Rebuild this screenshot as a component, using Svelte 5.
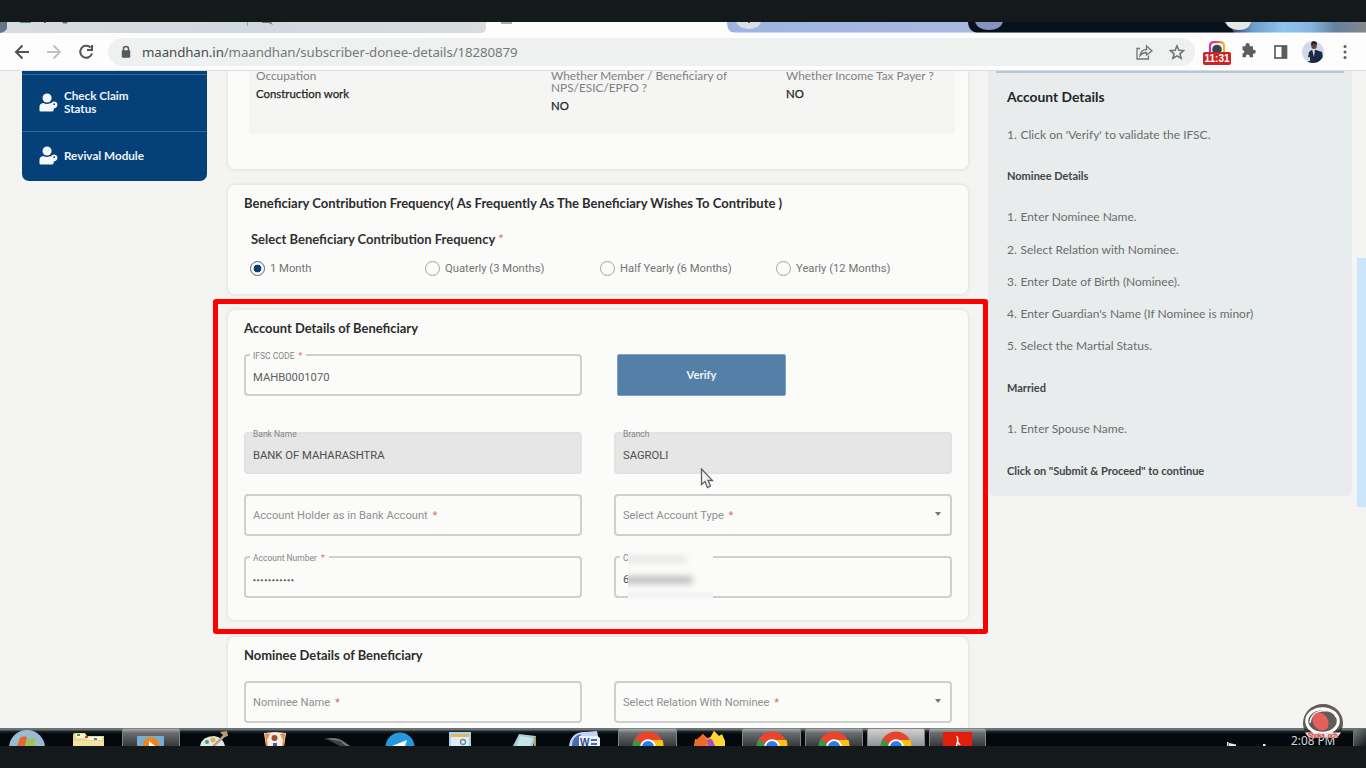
<script>
  const occupation = [
    { label: ['Occupation'], value: 'Construction work' },
    { label: ['Whether Member / Beneficiary of', 'NPS/ESIC/EPFO ?'], value: 'NO' },
    { label: ['Whether Income Tax Payer ?'], value: 'NO' }
  ];
  const frequencies = ['1 Month', 'Quaterly (3 Months)', 'Half Yearly (6 Months)', 'Yearly (12 Months)'];
  const nomineeSteps = [
    'Enter Nominee Name.',
    'Select Relation with Nominee.',
    'Enter Date of Birth (Nominee).',
    "Enter Guardian's Name (If Nominee is minor)",
    'Select the Martial Status.'
  ];
  const menu = [['Check Claim', 'Status'], ['Revival Module']];
</script>

{#snippet chrome()}
  <svg width="32" height="15" viewBox="0 0 32 15">
    <circle cx="16" cy="16" r="15.500" fill="#e8452c" />
    <path d="M0.500 15A15.500 15.500 0 0 1 3 8L11 15Z" fill="#2e9b4b" />
    <path d="M16 9H30.500Q31.500 12 31.500 15H16Z" fill="#fbc116" />
    <circle cx="16" cy="16" r="7.800" fill="#fff" />
    <circle cx="16" cy="16" r="6" fill="#2b7de9" />
  </svg>
{/snippet}

<div class="screen">
  <div class="band"></div>

  <div class="tabs">
    <svg width="1366" height="11" viewBox="0 0 1366 11">
      <defs>
        <linearGradient id="t1"><stop offset="0" stop-color="#d9dce0" /><stop offset=".5" stop-color="#d0d8e0" /><stop offset="1" stop-color="#d8dcde" /></linearGradient>
        <linearGradient id="t2"><stop offset="0" stop-color="#9db4e2" /><stop offset="1" stop-color="#a9b8e0" /></linearGradient>
        <linearGradient id="t3"><stop offset="0" stop-color="#22384f" /><stop offset=".18" stop-color="#6f9dca" /><stop offset=".4" stop-color="#8dc4f0" /><stop offset=".6" stop-color="#86b5e0" /><stop offset=".78" stop-color="#65809f" /><stop offset="1" stop-color="#85888c" /></linearGradient>
      </defs>
      <rect width="1366" height="11" fill="#fdfdfc" />
      <path d="M0 0H486V6Q486 11 480 11H0Z" fill="url(#t1)" />
      <path d="M0 0H7V6Q6 10 0 11Z" fill="#667487" />
      <path d="M20 0h11v1h-11z" fill="#4f9267" />
      <path d="M44 0h2v1h-2zM62 0h6l-1 1.500h-4z" fill="#6b7178" />
      <rect x="247" width="1" height="4" fill="#9da1a5" />
      <path d="M261 0h10l2 3-4-2h-6z" fill="#70767c" />
      <path d="M501 0h11v2h-11z" fill="#a9adb0" />
      <path d="M727 0H975V11H735Q727 11 727 0Z" fill="url(#t2)" />
      <path d="M968 0H1232L1236 11H976Q968 8 968 0Z" fill="#06121d" />
      <path d="M975 0h28q-3 8-14 8t-14-8Z" fill="#8793bd" />
      <path d="M1228 0H1366V11H1234Z" fill="url(#t3)" />
      <path d="M736 0h25q-2 7-12 7t-13-7Z" fill="#dadee4" />
      <path d="M748 0h2v1h-2z" fill="#555" />
      <path d="M1225 0h26q-2 8-12 8t-14-8Z" fill="#e4e7ea" />
      <rect x="727" y="10" width="639" height="1" fill="#fff" opacity=".45" />
    </svg>
  </div>

  <div class="toolbar">
    <svg class="nav" width="110" height="36" viewBox="0 0 110 36" fill="none" stroke-width="2">
      <path d="M29 18H16.500M22.500 11.500L16 18L22.500 24.500" stroke="#505356" />
      <path d="M47 18H59.500M53.500 11.500L60 18L53.500 24.500" stroke="#bfc1c3" />
      <path d="M90.500 13.500A6 6 0 1 0 92 19.500" stroke="#505356" />
      <path d="M93 11V17H87V15H91V11Z" fill="#505356" />
    </svg>
    <div class="omnibox">
      <svg width="10" height="14" viewBox="0 0 10 14"><path d="M2.500 6V4a2.500 2.500 0 0 1 5 0V6" fill="none" stroke="#55595d" stroke-width="1.500" /><rect x=".8" y="5.300" width="8.400" height="7.500" rx="1" fill="#55595d" /></svg>
      <span class="url"><b>maandhan.in</b>/maandhan/subscriber-donee-details/18280879</span>
      <svg class="boxicons" width="56" height="20" viewBox="0 0 56 20" fill="none" stroke="#717477" stroke-width="1.300">
        <path d="M5 6.500H2V17H13.500V13.500M5 13.500Q6 7.500 11.500 7.500V4L17 9L11.500 13V10.500Q7.500 10.500 5 13.500Z" />
        <path d="M42 4L43.900 8.300L48.500 8.700L45 11.800L46.100 16.300L42 13.900L37.900 16.300L39 11.800L35.500 8.700L40.100 8.300Z" stroke-width="1.600" />
      </svg>
    </div>
    <div class="ext">
      <svg width="22" height="11" viewBox="0 0 22 11">
        <defs><linearGradient id="cam"><stop offset="0" stop-color="#d12cae" /><stop offset=".5" stop-color="#f34b54" /><stop offset="1" stop-color="#f6b52b" /></linearGradient></defs>
        <path d="M4 11V5Q4 1.200 8 1.200H14Q18 1.200 18 5V11" stroke="url(#cam)" stroke-width="2.200" fill="none" /><circle cx="11" cy="8.500" r="4.800" fill="#2f474f" />
      </svg>
      <span>11:31</span>
    </div>
    <svg class="right" width="130" height="36" viewBox="0 0 130 36">
      <path transform="translate(0 -1.800)" d="M6.500 14H9.500V13a2.100 2.100 0 0 1 4.200 0V14H17V17.500H17.800a2 2 0 0 1 0 4H17V25H13.500V24a1.800 1.800 0 0 0-3.600 0V25H6.500V21.300a1.800 1.800 0 0 0 0-3.600Z" fill="#5b5e61" />
      <rect x="39" y="12" width="11.500" height="12" fill="none" stroke="#5b5e61" stroke-width="1.700" /><rect x="45.500" y="12" width="5" height="12" fill="#5b5e61" />
      <clipPath id="face"><circle cx="77" cy="18" r="11" /></clipPath>
      <g clip-path="url(#face)"><rect x="66" y="6" width="24" height="26" fill="#cfdae4" /><path d="M71 30L73 18L77 15L86 18L88 30Z" fill="#1d2944" /><path d="M76 15l3 0-1 8z" fill="#dde6ee" /><path d="M69 24l5-1v4l-5 1z" fill="#cfdae4" /><ellipse cx="78" cy="11.500" rx="2.800" ry="3.600" fill="#5d4438" /><path d="M75 11q0-4 3-4t3 4q-2.500-2-6 0z" fill="#222" /></g>
      <circle cx="109" cy="12.500" r="1.500" fill="#5b5e61" /><circle cx="109" cy="18" r="1.500" fill="#5b5e61" /><circle cx="109" cy="23.500" r="1.500" fill="#5b5e61" />
    </svg>
  </div>

  <div class="page">
    <nav class="side">
      {#each menu as item}
        <div class="entry" class:tall={item.length > 1}>
          <svg width="19" height="19" viewBox="0 0 20 20" fill="#f4f8fb">
            <circle cx="8.500" cy="5.200" r="4.800" /><path d="M.5 18.500V15Q.5 11 4.500 10.500Q8.500 12.500 12 10.500L14.500 13.500L15.500 15V17Q15.500 19.500 14 19.500H2Q.5 19.500 .5 18.500Z" /><path d="M12.500 12Q13 9 16 9Q19.800 9.500 19.300 13Q18.500 16.500 15 16.500Z" /><circle cx="16" cy="11.800" r=".9" fill="#064078" />
          </svg>
          <span>{#each item as line}<i>{line}</i>{/each}</span>
        </div>
      {/each}
    </nav>

    <main>
      <section class="card c1">
        <div class="info">
          {#each occupation as o}
            <div>
              <div class="lab">{#each o.label as line}<i>{line}</i>{/each}</div>
              <p>{o.value}</p>
            </div>
          {/each}
        </div>
      </section>

      <section class="card c2">
        <h2 class="freq">Beneficiary Contribution Frequency( As Frequently As The Beneficiary Wishes To Contribute )</h2>
        <h3>Select Beneficiary Contribution Frequency<span class="star">*</span></h3>
        <div class="radios">
          {#each frequencies as f, i}
            <label><span class="radio" class:on={i === 0}></span>{f}</label>
          {/each}
        </div>
      </section>

      <section class="card c3">
        <h2>Account Details of Beneficiary</h2>
        <div class="grid">
          <div class="field"><span class="float">IFSC CODE <em>*</em></span><span class="val soft">MAHB0001070</span></div>
          <button>Verify</button>
          <div class="field off"><span class="float">Bank Name</span><span class="val">BANK OF MAHARASHTRA</span></div>
          <div class="field off"><span class="float">Branch</span><span class="val">SAGROLI</span></div>
          <div class="field"><span class="ph">Account Holder as in Bank Account <em>*</em></span></div>
          <div class="field"><span class="ph">Select Account Type <em>*</em></span><span class="caret"></span></div>
          <div class="field"><span class="float">Account Number <em>*</em></span><span class="val dots">•••••••••••</span></div>
          <div class="field"><span class="float">C</span><span class="val">6</span>
            <div class="mask"><span class="smear a"></span><span class="smear b"></span></div>
          </div>
        </div>
        <svg class="cursor" width="14" height="22" viewBox="0 0 14 22"><path d="M1.500 1V16.500L5 13.500L7.500 19.500L10.500 18L8 12.500H12.500Z" fill="#f1f1f1" stroke="#606060" stroke-width="1.300" /></svg>
      </section>

      <section class="card c4">
        <h2>Nominee Details of Beneficiary</h2>
        <div class="grid">
          <div class="field"><span class="ph">Nominee Name <em>*</em></span></div>
          <div class="field"><span class="ph">Select Relation With Nominee <em>*</em></span><span class="caret"></span></div>
        </div>
      </section>
    </main>

    <aside>
      <h1>Account Details</h1>
      <ol class="first"><li>Click on 'Verify' to validate the IFSC.</li></ol>
      <h4>Nominee Details</h4>
      <ol class="steps">{#each nomineeSteps as s}<li>{s}</li>{/each}</ol>
      <h4>Married</h4>
      <ol class="spouse"><li>Enter Spouse Name.</li></ol>
      <h4>Click on "Submit &amp; Proceed" to continue</h4>
    </aside>
    <div class="scroll"></div>
    <div class="outline"></div>
  </div>

  <div class="taskbar">
    <div class="slot s1"><svg width="38" height="17" viewBox="0 0 38 17"><defs><radialGradient id="orb" cy="1"><stop offset="0" stop-color="#2d6ea5" /><stop offset=".7" stop-color="#4b7ea9" /><stop offset="1" stop-color="#9dbbd0" /></radialGradient></defs><circle cx="19" cy="19" r="18" fill="url(#orb)" /><path d="M12 9Q15 6 19 8L17 17H9Z" fill="#e7662e" /><path d="M20 9Q24 11 28 9L26 17H18Z" fill="#9dc450" /></svg></div>
    <div class="slot s2"><svg width="34" height="13" viewBox="0 0 34 13"><path d="M1 13V2Q1 0 3 0H13L15 3H32V13Z" fill="#ecd88a" /><path d="M4 1H13V5H4ZM15 4H30V7H15Z" fill="#fff7dc" /><path d="M5 1h3v2H5z" fill="#3c9c57" /><path d="M13 3h3v2h-3z" fill="#d8402f" /><path d="M22 5h3v2h-3z" fill="#2f86c9" /><path d="M1 8H32V13H1Z" fill="#f3e3a0" /></svg></div>
    <div class="slot s3 open"><svg width="28" height="10" viewBox="0 0 28 10"><rect width="27" height="10" rx="1" fill="#77aed4" /><circle cx="14" cy="9.500" r="8.500" fill="#ee8523" /><path d="M12 5L18 10H12Z" fill="#fff" /></svg></div>
    <div class="slot s4"><svg width="30" height="15" viewBox="0 0 30 15"><path d="M1 15Q3 5 15 5Q24 6 26 15Z" fill="#d9e8e9" /><circle cx="8" cy="11" r="2" fill="#4aa65c" /><circle cx="14" cy="9" r="2.500" fill="#e7b43b" /><path d="M13 15L24 4L21 1L28 0L29 5L26 6L16 15Z" fill="#bf9b72" /></svg></div>
    <div class="slot s5"><svg width="24" height="14" viewBox="0 0 24 14"><path d="M1 1L12 0L23 1L21 14H3Z" fill="#f6ede3" /><path d="M2 1L7 2L4 8L5 14H3ZM22 1L17 2L20 8L19 14H21Z" fill="#ef8b3f" /><circle cx="11.500" cy="6" r="3" fill="#a34935" /><path d="M10 11h4v3h-4z" fill="#3e5f9b" /></svg></div>
    <div class="slot s6"><svg width="28" height="9" viewBox="0 0 28 9"><path d="M1 2Q13-1 20 4L27 9H22Q15 3 1 2Z" fill="#777" /><path d="M5 3L17 9H23L17 4Z" fill="#3d3f40" /></svg></div>
    <div class="slot s7"><svg width="30" height="14" viewBox="0 0 30 14"><circle cx="15" cy="15" r="14.500" fill="#2598dc" /><path d="M7 14L22 8L20 14Z" fill="#fff" /></svg></div>
    <div class="slot s8"><svg width="23" height="14" viewBox="0 0 23 14"><rect width="22" height="14" fill="#a9d2ed" /><path d="M2 2h18v3H2z" fill="#e8b566" /><path d="M2 5h18v9H2z" fill="#dfebf2" /><circle cx="14" cy="10" r="2.500" fill="none" stroke="#658baa" stroke-width="1.300" /></svg></div>
    <div class="slot s9"><svg width="26" height="13" viewBox="0 0 26 13"><path d="M7 1L24 3L21 13H1Z" fill="#a6cdd2" /><path d="M8 3L21 5L18 13H5Z" fill="#c6e5e8" /><path d="M22 4h2v9h-2z" fill="#b89a5a" /></svg></div>
    <div class="slot s10"><svg width="32" height="15" viewBox="0 0 32 15"><path d="M0 15Q2 0 17 1L28 0L31 15Z" fill="#c4d4ef" /><path d="M3 15Q3 5 12 3L10 15Z" fill="#496caf" /><path d="M10 5h18l3 2v8H10z" fill="#edf2fa" /><text x="11" y="15" font-size="10" font-weight="700" fill="#2c4c92" font-family="Liberation Sans, sans-serif">W</text><path d="M22 8h6v2h-6zM22 12h6v2h-6z" fill="#496caf" /></svg></div>
    <div class="slot s11 open">{@render chrome()}</div>
    <div class="slot s12"><svg width="32" height="15" viewBox="0 0 32 15"><path d="M0 15L1 8L4 9L9 3L13 7L17 6L20 0L25 5L30 8L31 15Z" fill="#f58a20" /><path d="M20 0L25 5L28 3L31 10V15H21L16 7Z" fill="#fdd535" /><path d="M13 9L18 8L21 15H14Z" fill="#a44fc6" /><path d="M2 9L9 3L14 12L11 15H0Z" fill="#ef6a2a" /></svg></div>
    <div class="slot s13 open">{@render chrome()}</div>
    <div class="slot s14 open">{@render chrome()}</div>
    <div class="slot s15 open lit">{@render chrome()}</div>
    <div class="slot s16 open"><svg width="29" height="14" viewBox="0 0 29 14"><rect width="29" height="14" fill="#e21f0c" /><path d="M13.500 4Q16 6 13.500 14M14.500 10L17 13" stroke="#fff" stroke-width="1.500" fill="none" /></svg></div>
    <svg class="tray" width="50" height="4" viewBox="0 0 50 4"><path d="M1 0h1.500v4H1zM3 1l7 1.500L10 4H3z" fill="#e8edf0" /><path d="M37 2h2.500v2H37z" fill="#e8edf0" /></svg>
    <span class="clock">2:08 PM</span>
    <div class="peek"></div>
  </div>
  <div class="band"></div>

  <svg class="mark" width="42" height="38" viewBox="0 0 42 38">
    <path d="M1 20A20 19 0 0 1 41 20Q41 26 38 30H4Q1 26 1 20Z" fill="#625b58" />
    <path d="M2 25Q8 29 21 29T40 25L38 31H4Z" fill="#2b2c2d" />
    <ellipse cx="20.500" cy="18" rx="15.800" ry="12.300" fill="#625b58" stroke="#fff" stroke-width="3" />
    <path d="M8 20Q9 9 22 7.500Q32 7.500 34 14" fill="none" stroke="#f6f4f4" stroke-width="1.500" />
    <ellipse cx="18.500" cy="18.500" rx="7.500" ry="9.500" transform="rotate(-32 18.500 18.500)" fill="#e3605b" />
    <path d="M3 29.500H39L35 35H7Z" fill="#e9e4e2" />
    <text x="21" y="34.500" text-anchor="middle" font-size="6.500" font-weight="700" fill="#cf3c38" font-family="Liberation Mono, monospace" textLength="30">Shoka.och</text>
  </svg>
</div>

<style>
  :global(body) { margin: 0; overflow: hidden; }
  .screen, .screen * { box-sizing: border-box; }
  .screen { position: relative; width: 1366px; height: 768px; overflow: hidden; display: flex; flex-direction: column; font-family: Lato, sans-serif; background: #f4f4f3; }
  .screen svg { display: block; flex: none; }
  i { font-style: normal; display: block; }
  .band { height: 22px; flex: none; background: #14191c; }
  .tabs { height: 11px; flex: none; }
  .toolbar { height: 38px; flex: none; display: flex; align-items: center; background: #fdfdfd; border-bottom: 1px solid #dcdcdc; }
  .nav { margin-right: -2px; }
  .omnibox { width: 1087px; height: 28px; padding: 0 4px 0 13px; display: flex; align-items: center; border-radius: 14px; background: #eff1f1; margin-right: 8px; flex: none; }
  .url { margin-left: 11px; font: 13.300px "Noto Sans", sans-serif; letter-spacing: -.1px; color: #76797c; white-space: nowrap; }
  .url b { font-weight: 400; color: #4a4d50; }
  .boxicons { margin-left: auto; }
  .ext { width: 28px; height: 28px; display: flex; flex-direction: column; align-items: center; padding-top: 3px; flex: none; }
  .ext span { width: 28px; height: 13px; background: #d02123; border-radius: 2px; color: #fff; font: 700 10px/13px "Liberation Sans", sans-serif; text-align: center; flex: none; }
  .right { margin-left: 5px; }

  .page { position: relative; height: 657px; flex: none; display: flex; align-items: flex-start; background: #f4f4f3; overflow: hidden; }
  .side { width: 185px; height: 110px; margin-left: 22px; background: #064078; border-radius: 0 0 7px 7px; padding-top: 3px; }
  .entry { display: flex; align-items: center; gap: 6px; padding: 0 0 1px 17px; height: 49px; border-top: 1px solid #2c6ba0; color: #eef4fa; font-size: 11.700px; font-weight: 700; line-height: 13px; }
  .entry.tall { height: 57px; padding-bottom: 2px; }

  main { width: 740px; margin-left: 21px; display: flex; flex-direction: column; }
  .card { background: #fbfbfa; border-radius: 7px; box-shadow: 0 0 4px rgba(0, 0, 0, .12); padding: 0 16px; position: relative; flex: none; }
  .c1 { height: 98px; border-radius: 0 0 7px 7px; padding: 0 13px 0 21px; }
  .info { height: 63px; background: #f5f5f4; display: grid; grid-template-columns: 295px 235px 1fr; padding: 0 0 0 7px; font-size: 11.850px; }
  .lab { color: #7f8182; line-height: 12px; margin-top: -1px; white-space: nowrap; }
  .info p { margin: 5px 0 0; font-size: 11.400px; line-height: 14px; color: #242526; -webkit-text-stroke: .25px; }
  .c2 { height: 109px; margin-top: 16px; }
  .c3 { height: 310px; margin-top: 16px; }
  .c4 { height: 150px; margin-top: 17px; }
  h1, h2, h3, h4 { margin: 0; white-space: nowrap; font-weight: 700; }
  h2 { font-size: 12.950px; line-height: 18px; padding-top: 9px; color: #2b2c2d; }
  .freq { font-size: 13.040px; }
  h3 { font-size: 13px; line-height: 18px; padding: 18px 0 0 7px; color: #303132; }
  .star { margin-left: 3px; color: #e06a62; font-weight: 400; }
  .radios { display: grid; grid-template-columns: 175px 175px 176px 1fr; padding: 12px 0 0 6px; font: 11.250px/17px Roboto, sans-serif; color: #737474; }
  .radios label { display: flex; gap: 5px; align-items: center; }
  .radio { width: 15px; height: 15px; border: 1.500px solid #a2a3a3; border-radius: 50%; }
  .radio.on { border-color: #56636f; background: radial-gradient(circle, #0a3f75 0 3.600px, transparent 4.200px); }
  .grid { display: grid; grid-template-columns: 338px 338px; column-gap: 32px; grid-template-rows: 42px; row-gap: 20px; padding-top: 17px; }
  .c3 .grid { grid-template-rows: 58px 42px 42px 42px; }
  .field { position: relative; height: 42px; border: 2px solid #cfcfcf; border-radius: 4px; display: flex; align-items: center; padding: 0 7px; font-family: Roboto, sans-serif; white-space: nowrap; }
  .off { background: #e6e6e6; border-color: #e2e2e2; }
  .float { position: absolute; left: 4px; top: -5px; padding: 0 4px 0 3px; background: #fbfbfa; font-size: 8.500px; line-height: 10px; color: #858686; }
  .off .float { background: none; }
  em { font-style: normal; color: #e06a62; margin-left: 2px; }
  .val { font-size: 11.250px; color: #4e4f50; padding-top: 5px; }
  .soft { color: #5f6061; }
  .ph { font-size: 11.150px; color: #8f9090; }
  .dots { font-size: 8px; letter-spacing: 1.100px; padding-top: 7px; -webkit-text-stroke: .5px; }
  .caret { margin: 0 2px 2px auto; border: 3.500px solid transparent; border-top: 4px solid #777; border-bottom: 0; }
  button { width: 169px; height: 42px; margin-left: 3px; padding: 0 0 2px; border: 1px solid #7ba3c8; border-radius: 2px; background: #5480a7; color: #f0f5f9; font: 700 11.200px Lato, sans-serif; }
  .mask { position: absolute; left: 12px; top: -6px; width: 85px; height: 50px; background: #fbfbfa; overflow: hidden; }
  .mask::after { content: ''; position: absolute; left: 0; right: 0; bottom: 0; height: 12px; background: linear-gradient(transparent, #f3f3f3 40%, #f5f5f5 60%, transparent); }
  .smear { position: absolute; left: -5px; border-radius: 3px; filter: blur(3px); }
  .smear.a { top: 5px; width: 64px; height: 4px; background: #d8d8d8; }
  .smear.b { top: 24px; width: 70px; height: 8px; background: #bfbfbf; }
  .cursor { position: absolute; left: 472px; top: 158px; }

  aside { width: 364px; height: 425px; margin-left: 20px; background: #e8ecec; border-radius: 0 0 7px 7px; padding: 17px 0 0 19px; position: relative; color: #696c6d; font-size: 12px; }
  aside::before { content: ''; position: absolute; left: 8px; right: 8px; top: 0; height: 2px; background: #b4c7d3; }
  h1 { font-size: 13.850px; line-height: 18px; color: #242526; }
  h4 { font-size: 11px; line-height: 16px; color: #434546; }
  ol { margin: 17px 0; padding: 0; list-style: none; counter-reset: n; }
  li { line-height: 32.300px; white-space: nowrap; counter-increment: n; display: flex; }
  li::before { content: counter(n) '.'; width: 13.500px; flex: none; }
  .first { margin: 13px 0 17px; }
  .spouse { margin-bottom: 18px; }
  .scroll { width: 9px; height: 249px; margin: 187px 0 0 5px; background: #cbe5fb; }
  .outline { position: absolute; left: 213px; top: 228px; width: 775px; height: 335px; border: 5px solid #fd0000; border-radius: 3px; }

  .taskbar { position: relative; height: 18px; flex: none; display: flex; background: linear-gradient(#6b7274 0 2px, #20292d 3px, #03090d 6px); overflow: hidden; }
  .slot { height: 18px; display: flex; justify-content: center; align-items: flex-end; flex: none; }
  .open { background: linear-gradient(#a9abac, #696c6e 4px, #37393b); border: 1px solid #818385; border-bottom: 0; border-radius: 2px 2px 0 0; }
  .lit { background: linear-gradient(#d0d1d1, #929494); }
  .s1 { width: 54px; } .s2 { width: 70px; } .s3 { width: 58px; margin-left: -2px; } .s4 { width: 68px; } .s5 { width: 54px; } .s6 { width: 70px; } .s7 { width: 56px; } .s8 { width: 65px; }
  .s9 { width: 64px; } .s10 { width: 56px; } .s11 { width: 59px; margin-left: 5px; } .s12 { width: 65px; } .s13 { width: 59px; } .s14, .s15 { width: 58px; margin-left: 4px; } .s16 { width: 57px; margin-left: 4px; }
  .tray { margin: 14px 0 0 240px; }
  .clock { position: absolute; left: 1291px; top: 5px; font: 11.800px/15px "Noto Sans", sans-serif; color: #d5dadd; white-space: nowrap; }
  .peek { position: absolute; right: 0; top: 1px; width: 13px; height: 17px; background: linear-gradient(135deg, #777e80, #15191b); border-left: 1px solid #6a7072; }
  .mark { position: absolute; left: 1302px; top: 703px; }
</style>
